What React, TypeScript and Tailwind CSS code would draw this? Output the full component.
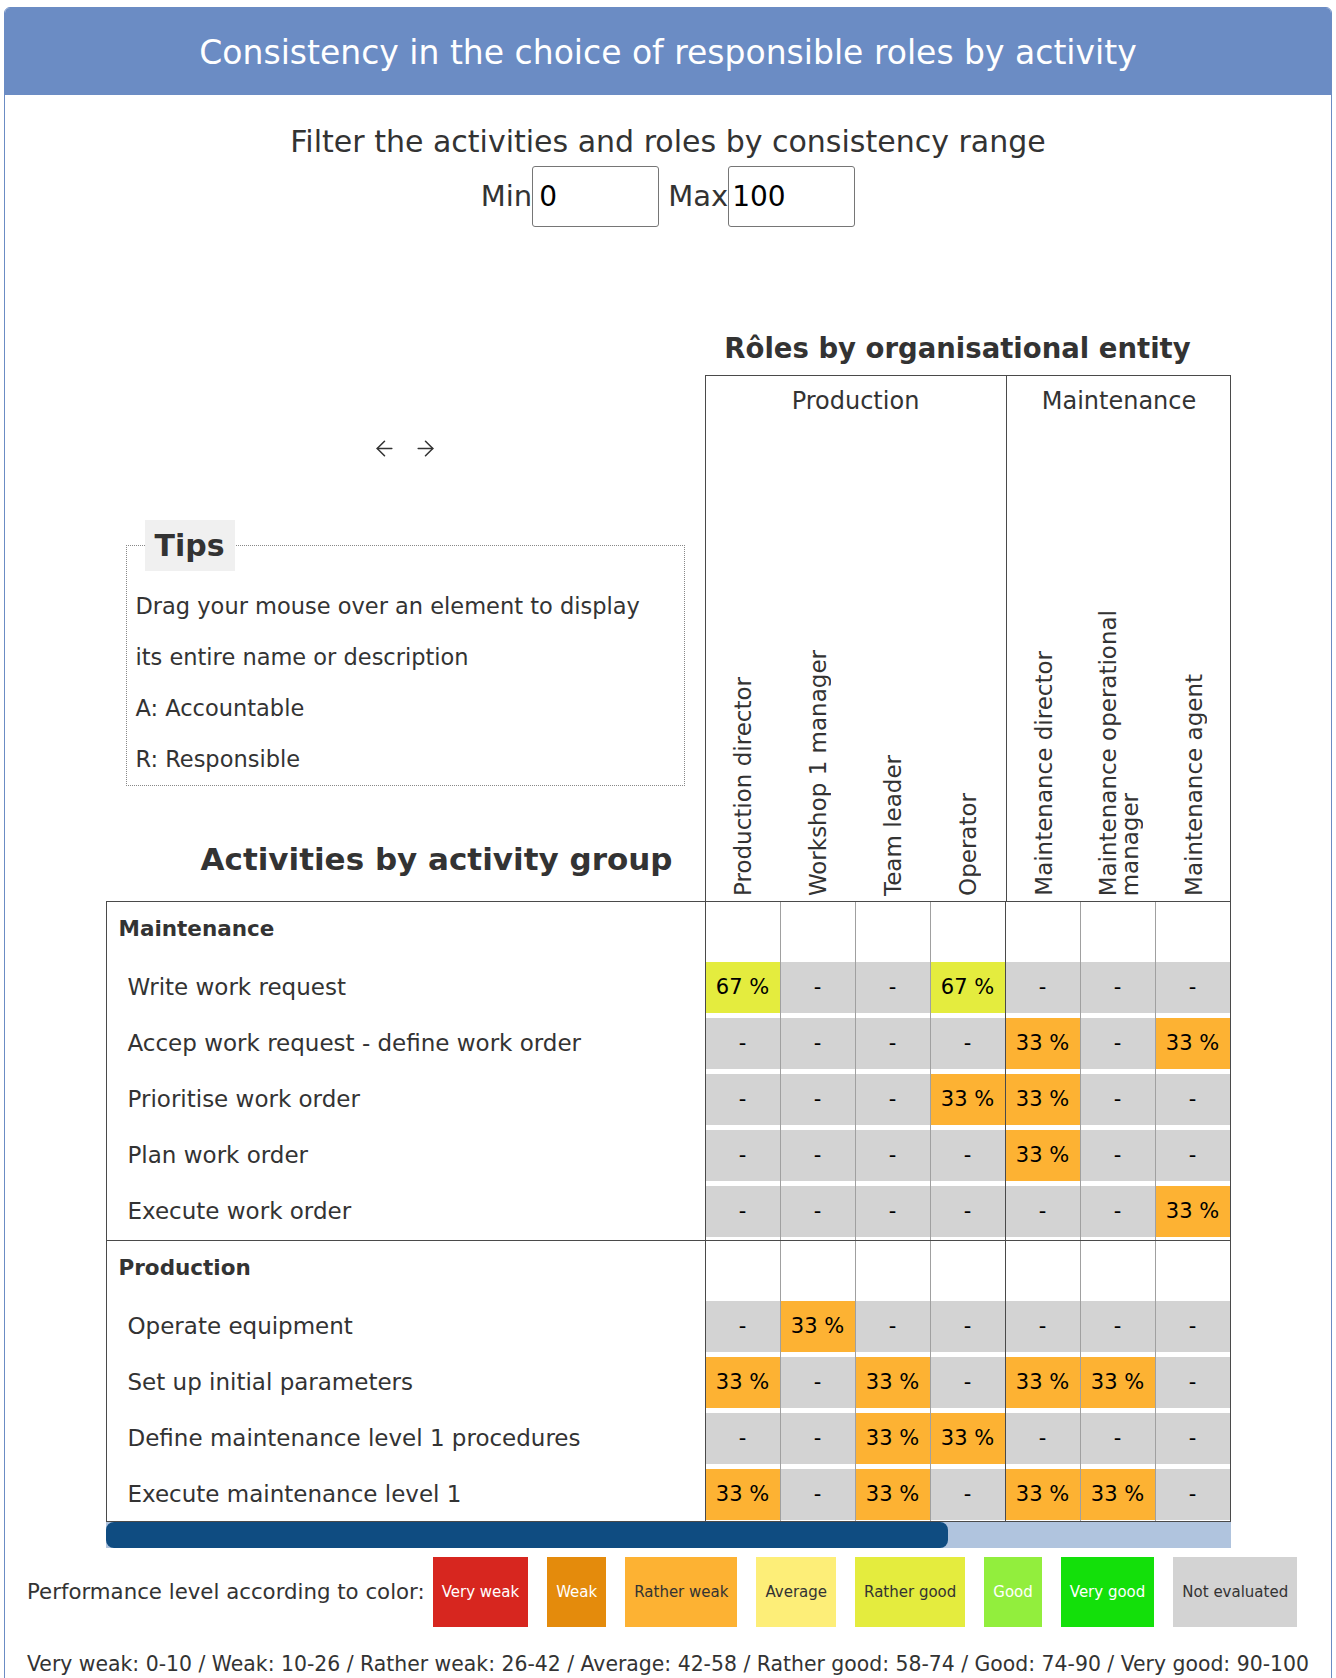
import { ArrowLeft, ArrowRight } from 'lucide-react';

type Val = number | null;

interface Activity {
  name: string;
  values: Val[];
}

interface Group {
  name: string;
  activities: Activity[];
}

const roleGroups = [
  { name: 'Production', roles: ['Production director', 'Workshop 1 manager', 'Team leader', 'Operator'] },
  { name: 'Maintenance', roles: ['Maintenance director', 'Maintenance operational\nmanager', 'Maintenance agent'] },
];

const groups: Group[] = [
  {
    name: 'Maintenance',
    activities: [
      { name: 'Write work request', values: [67, null, null, 67, null, null, null] },
      { name: 'Accep work request - define work order', values: [null, null, null, null, 33, null, 33] },
      { name: 'Prioritise work order', values: [null, null, null, 33, 33, null, null] },
      { name: 'Plan work order', values: [null, null, null, null, 33, null, null] },
      { name: 'Execute work order', values: [null, null, null, null, null, null, 33] },
    ],
  },
  {
    name: 'Production',
    activities: [
      { name: 'Operate equipment', values: [null, 33, null, null, null, null, null] },
      { name: 'Set up initial parameters', values: [33, null, 33, null, 33, 33, null] },
      { name: 'Define maintenance level 1 procedures', values: [null, null, 33, 33, null, null, null] },
      { name: 'Execute maintenance level 1', values: [33, null, 33, null, 33, 33, null] },
    ],
  },
];

const legend = [
  { label: 'Very weak', cls: 'bg-[#d7261f] text-white' },
  { label: 'Weak', cls: 'bg-[#e48b0c] text-white' },
  { label: 'Rather weak', cls: 'bg-[#fdb233] text-[#333]' },
  { label: 'Average', cls: 'bg-[#fdee78] text-[#333]' },
  { label: 'Rather good', cls: 'bg-[#e4ec3e] text-[#333]' },
  { label: 'Good', cls: 'bg-[#92ee3d] text-white' },
  { label: 'Very good', cls: 'bg-[#13e00a] text-white' },
  { label: 'Not evaluated', cls: 'bg-[#d3d3d3] text-[#333]' },
];

function cellBg(v: Val) {
  if (v === null) return 'bg-[#d3d3d3]';
  if (v < 10) return 'bg-[#d7261f]';
  if (v < 26) return 'bg-[#e48b0c]';
  if (v < 42) return 'bg-[#fdb233]';
  if (v < 58) return 'bg-[#fdee78]';
  if (v < 74) return 'bg-[#e4ec3e]';
  if (v < 90) return 'bg-[#92ee3d]';
  return 'bg-[#13e00a]';
}

// first column of each entity gets the dark separator
const darkCols = [0, 4];

function RoleCells({ values, height }: { values?: Val[]; height: string }) {
  return (
    <>
      {Array.from({ length: 7 }).map((_, i) => (
        <div
          key={i}
          className={`w-[75px] shrink-0 border-l ${darkCols.includes(i) ? 'border-[#4a4a4a]' : 'border-[#a0a0a0]'} ${height}`}
        >
          {values && (
            <div
              className={`mt-[5px] h-[51px] flex items-center justify-center text-[21px] text-black ${cellBg(values[i])}`}
            >
              {values[i] === null ? '-' : `${values[i]} %`}
            </div>
          )}
        </div>
      ))}
    </>
  );
}

export default function App() {
  return (
    <div className="font-['DejaVu_Sans',sans-serif] text-[#333] bg-white min-h-screen pt-[7px]">
      <div className="mx-[4px] border border-[#6b8cc4] rounded-t-[6px] overflow-hidden">
        <div className="h-[87px] bg-[#6b8cc4] flex items-center justify-center text-white text-[33px] pt-[3px]">
          Consistency in the choice of responsible roles by activity
        </div>

        <div className="pt-[29px] text-center text-[30px] leading-[36px]">
          Filter the activities and roles by consistency range
        </div>
        <div className="mt-[6px] flex items-center justify-center text-[29px]">
          <span>Min</span>
          <input
            defaultValue="0"
            className="w-[127px] h-[61px] border border-[#767676] rounded-[3px] pl-[6px] text-black text-[28px] font-['DejaVu_Sans',sans-serif]"
          />
          <span className="ml-[9px]">Max</span>
          <input
            defaultValue="100"
            className="w-[127px] h-[61px] border border-[#767676] rounded-[3px] pl-[3px] text-black text-[28px] font-['DejaVu_Sans',sans-serif]"
          />
        </div>

        <div className="mt-[103px] w-[1125px] mx-auto">
          <div className="flex items-end">
            <div className="w-[599px] shrink-0 flex flex-col">
              <div className="h-[30px] flex items-center justify-center gap-[16px]">
                <ArrowLeft size={25} strokeWidth={1.5} />
                <ArrowRight size={25} strokeWidth={1.5} />
              </div>
              <fieldset className="mt-[57px] mx-[20px] border border-dotted border-[#888] pl-[9px]">
                <legend className="ml-[9px] bg-[#f0f0f0] px-[10px] text-[30px] font-bold leading-[51px]">
                  Tips
                </legend>
                <div className="pt-[10px] text-[22.5px] leading-[51px]">
                  <p>Drag your mouse over an element to display</p>
                  <p>its entire name or description</p>
                  <p>A: Accountable</p>
                  <p>R: Responsible</p>
                </div>
              </fieldset>
              <div className="mt-[53px] pb-[22px] pr-[32px] text-right text-[31px] font-bold leading-[40px]">
                Activities by activity group
              </div>
            </div>

            <div className="w-[526px] shrink-0">
              <div className="pr-[20px] text-center text-[27.5px] font-bold leading-[36px] whitespace-nowrap">
                Rôles by organisational entity
              </div>
              <div className="mt-[9px] h-[526px] border-t border-r border-[#4a4a4a] flex">
                {roleGroups.map((g) => (
                  <div key={g.name} className="border-l border-[#4a4a4a] flex flex-col">
                    <div className="pt-[10px] text-center text-[24px] leading-[30px]">{g.name}</div>
                    <div className="flex-1 flex">
                      {g.roles.map((r) => (
                        <div key={r} className="w-[75px] flex justify-center items-end pb-[5px]">
                          <div className="[writing-mode:vertical-rl] rotate-180 whitespace-pre text-[23px] leading-[22px]">
                            {r}
                          </div>
                        </div>
                      ))}
                    </div>
                  </div>
                ))}
              </div>
            </div>
          </div>

          <div className="border border-[#4a4a4a]">
            {groups.map((g, gi) => (
              <div key={g.name} className={gi > 0 ? 'border-t border-[#4a4a4a]' : ''}>
                <div className="flex">
                  <div className="w-[598px] shrink-0 h-[55px] flex items-center pl-[12px] text-[21.5px] font-bold">
                    {g.name}
                  </div>
                  <RoleCells height="h-[55px]" />
                </div>
                {g.activities.map((a) => (
                  <div key={a.name} className="flex">
                    <div className="w-[598px] shrink-0 pt-[5px]">
                      <div className="h-[51px] flex items-center pl-[21px] text-[23px]">{a.name}</div>
                    </div>
                    <RoleCells values={a.values} height="h-[56px]" />
                  </div>
                ))}
                <div className="flex">
                  <div className="w-[598px] shrink-0" />
                  <RoleCells height={gi === 0 ? 'h-[3px]' : 'h-[1px]'} />
                </div>
              </div>
            ))}
          </div>

          <div className="h-[26px] bg-[#b0c4de] flex">
            <div className="w-[842px] h-full bg-[#0f4c81] rounded-[8px]" />
          </div>
        </div>

        <div className="mt-[9px] pl-[22px] flex items-center">
          <span className="text-[21.3px] mr-[8px]">Performance level according to color:</span>
          <div className="flex gap-[19px]">
            {legend.map((l) => (
              <div key={l.label} className={`h-[70px] px-[9px] flex items-center text-[15px] ${l.cls}`}>
                {l.label}
              </div>
            ))}
          </div>
        </div>

        <div className="mt-[22px] pl-[22px] text-[20.4px] leading-[30px] whitespace-nowrap pb-[20px]">
          Very weak: 0-10 / Weak: 10-26 / Rather weak: 26-42 / Average: 42-58 / Rather good: 58-74 / Good: 74-90 / Very good: 90-100
        </div>
      </div>
    </div>
  );
}
